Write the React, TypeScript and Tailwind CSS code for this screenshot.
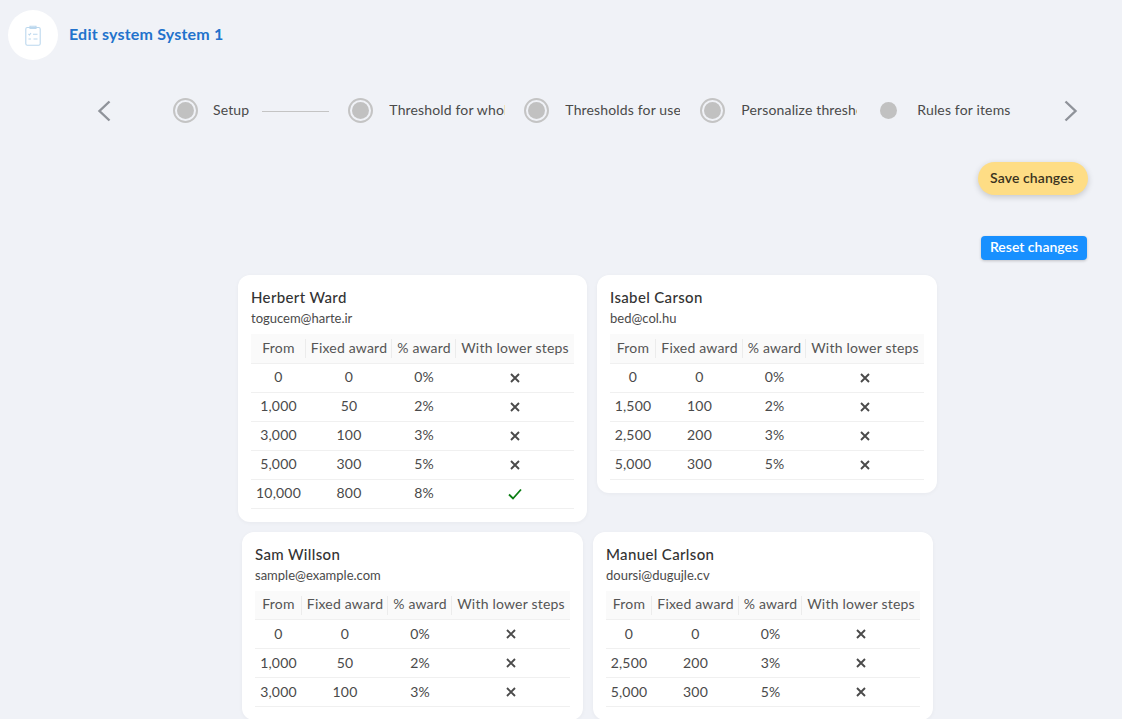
import React from 'react';

type Row = [string, string, string, boolean];

interface Person {
  name: string;
  email: string;
  rows: Row[];
  card: string;
  cols: string[];
}

const people: Person[] = [
  {
    name: 'Herbert Ward',
    email: 'togucem@harte.ir',
    card: 'w-[349px]',
    cols: ['w-[55px]', 'w-[86px]', 'w-[64px]', 'w-[118px]'],
    rows: [
      ['0', '0', '0%', false],
      ['1,000', '50', '2%', false],
      ['3,000', '100', '3%', false],
      ['5,000', '300', '5%', false],
      ['10,000', '800', '8%', true],
    ],
  },
  {
    name: 'Isabel Carson',
    email: 'bed@col.hu',
    card: 'w-[340px]',
    cols: ['w-[46px]', 'w-[87px]', 'w-[63px]', 'w-[118px]'],
    rows: [
      ['0', '0', '0%', false],
      ['1,500', '100', '2%', false],
      ['2,500', '200', '3%', false],
      ['5,000', '300', '5%', false],
    ],
  },
  {
    name: 'Sam Willson',
    email: 'sample@example.com',
    card: 'w-[341px]',
    cols: ['w-[47px]', 'w-[86px]', 'w-[64px]', 'w-[118px]'],
    rows: [
      ['0', '0', '0%', false],
      ['1,000', '50', '2%', false],
      ['3,000', '100', '3%', false],
    ],
  },
  {
    name: 'Manuel Carlson',
    email: 'doursi@dugujle.cv',
    card: 'w-[340px]',
    cols: ['w-[46px]', 'w-[87px]', 'w-[63px]', 'w-[118px]'],
    rows: [
      ['0', '0', '0%', false],
      ['2,500', '200', '3%', false],
      ['5,000', '300', '5%', false],
    ],
  },
];

const headers = ['From', 'Fixed award', '% award', 'With lower steps'];

const Cross = () => (
  <svg width="10" height="10" viewBox="0 0 10 10" className="inline-block align-middle">
    <path d="M1 1l8 8M9 1L1 9" stroke="#4a4a4a" strokeWidth="1.9" fill="none" />
  </svg>
);

const Check = () => (
  <svg width="14" height="12" viewBox="0 0 14 12" className="inline-block align-middle">
    <path d="M1 6.5l4 4L13 1.5" stroke="#0a7d12" strokeWidth="1.8" fill="none" />
  </svg>
);

const Chevron = ({ flip }: { flip?: boolean }) => (
  <svg width="14" height="22" viewBox="0 0 14 22" className={flip ? 'rotate-180' : ''}>
    <path d="M12.5 1.5L2.5 11l10 9.5" stroke="#8f939a" strokeWidth="2.4" fill="none" />
  </svg>
);

const Dot = () => (
  <div className="w-[25px] h-[25px] shrink-0 rounded-full border-[2px] border-[#c4c4c4] flex items-center justify-center">
    <div className="w-[17px] h-[17px] rounded-full bg-[#c1c1c1]" />
  </div>
);

const Step = ({ label, width }: { label: string; width: string }) => (
  <div className="flex items-center gap-[16px]">
    <Dot />
    <div className={`${width} overflow-hidden whitespace-nowrap pb-[2px] text-[14px] leading-[20px] tracking-[0.15px] text-[#4a4a4a]`}>{label}</div>
  </div>
);

const UserCard = ({ person }: { person: Person }) => (
  <div className={`${person.card} bg-white rounded-[12px] px-[13px] pt-[12px] pb-[13px] shadow-[0_1px_4px_rgba(0,0,0,0.04)]`}>
    <div className="text-[15px] leading-[20px] font-medium tracking-[0.35px] text-[#333]">{person.name}</div>
    <div className="mt-[2px] text-[13px] leading-[18px] text-[#4a4a4a]">{person.email}</div>
    <table className="mt-[7px] table-fixed border-collapse text-[14px] tracking-[0.2px] text-[#4a4a4a]">
      <thead>
        <tr className="h-[29px] bg-[#fafafa] border-b border-[#f0f0f0]">
          {headers.map((h, i) => (
            <th key={h} className={`${person.cols[i]} relative p-0 pb-[2px] font-normal text-center whitespace-nowrap text-[#555]`}>
              {h}
              {i < 3 && <span className="absolute right-0 top-[5px] h-[19px] w-px bg-[#ececec]" />}
            </th>
          ))}
        </tr>
      </thead>
      <tbody>
        {person.rows.map((row, i) => (
          <tr key={i} className="h-[29px] border-b border-[#f0f0f0]">
            <td className="p-0 pb-[2px] text-center">{row[0]}</td>
            <td className="p-0 pb-[2px] text-center">{row[1]}</td>
            <td className="p-0 pb-[2px] text-center">{row[2]}</td>
            <td className="p-0 pb-[3px] text-center">{row[3] ? <Check /> : <Cross />}</td>
          </tr>
        ))}
      </tbody>
    </table>
  </div>
);

export default function App() {
  return (
    <div className="h-[719px] overflow-hidden bg-[#f0f2f7] font-['Lato',sans-serif]">
      {/* Title */}
      <div className="flex items-center gap-[11px] pl-[8px] pt-[10px]">
        <div className="w-[50px] h-[50px] rounded-full bg-white flex items-center justify-center">
          <svg width="16" height="21" viewBox="0 0 16 21" fill="none" stroke="#bcd8ee" strokeWidth="1.1">
            <rect x="0.8" y="2.5" width="14.4" height="17.7" rx="1.5" />
            <path d="M5 2.5V1.2h6v2.3H5z" />
            <path d="M3.5 9l1 1 1.5-2M8 9.2h4.5M3.5 14h2.5M8.5 14h4" />
          </svg>
        </div>
        <div className="pb-[2px] text-[16px] font-bold tracking-[0.2px] text-[#2272cc]">Edit system System 1</div>
      </div>

      {/* Stepper */}
      <div className="mt-[38px] flex items-center pl-[97px] h-[25px]">
        <Chevron />
        <div className="ml-[62px] flex items-center gap-[15px]">
          <Dot />
          <span className="pb-[2px] text-[14px] tracking-[0.15px] text-[#4a4a4a] leading-[20px]">Setup</span>
        </div>
        <div className="ml-[13px] w-[67px] h-px mt-[2px] bg-[#c4c4c4]" />
        <div className="ml-[19px]"><Step label="Threshold for whole" width="w-[116px]" /></div>
        <div className="ml-[19px]"><Step label="Thresholds for users" width="w-[115px]" /></div>
        <div className="ml-[20px]"><Step label="Personalize thresholds" width="w-[116px]" /></div>
        <div className="ml-[23px] flex items-center gap-[20px]">
          <div className="w-[17px] h-[17px] rounded-full bg-[#c1c1c1]" />
          <span className="pb-[2px] text-[14px] tracking-[0.15px] text-[#4a4a4a] leading-[20px] whitespace-nowrap">Rules for items</span>
        </div>
        <div className="ml-[53px]"><Chevron flip /></div>
      </div>

      {/* Actions */}
      <div className="flex flex-col items-end pr-[34px] mt-[39px]">
        <button className="w-[110px] h-[33px] pb-[2px] pr-[2px] rounded-full bg-[#fedd85] text-[14px] font-semibold tracking-[0.1px] text-[#3a3320] shadow-[0_2px_6px_rgba(0,0,0,0.18)]">
          Save changes
        </button>
        <button className="mt-[41px] mr-px w-[106px] h-[24px] pb-[3px] rounded-[4px] bg-[#1890ff] text-[14px] font-semibold text-white shadow-[0_1px_3px_rgba(0,0,0,0.2)]">
          Reset changes
        </button>
      </div>

      {/* Cards */}
      <div className="mt-[15px] flex flex-col gap-[10px]">
        <div className="flex justify-center items-start gap-[10px] pl-[53px]">
          <UserCard person={people[0]} />
          <UserCard person={people[1]} />
        </div>
        <div className="flex justify-center items-start gap-[10px] pl-[53px]">
          <UserCard person={people[2]} />
          <UserCard person={people[3]} />
        </div>
      </div>
    </div>
  );
}
